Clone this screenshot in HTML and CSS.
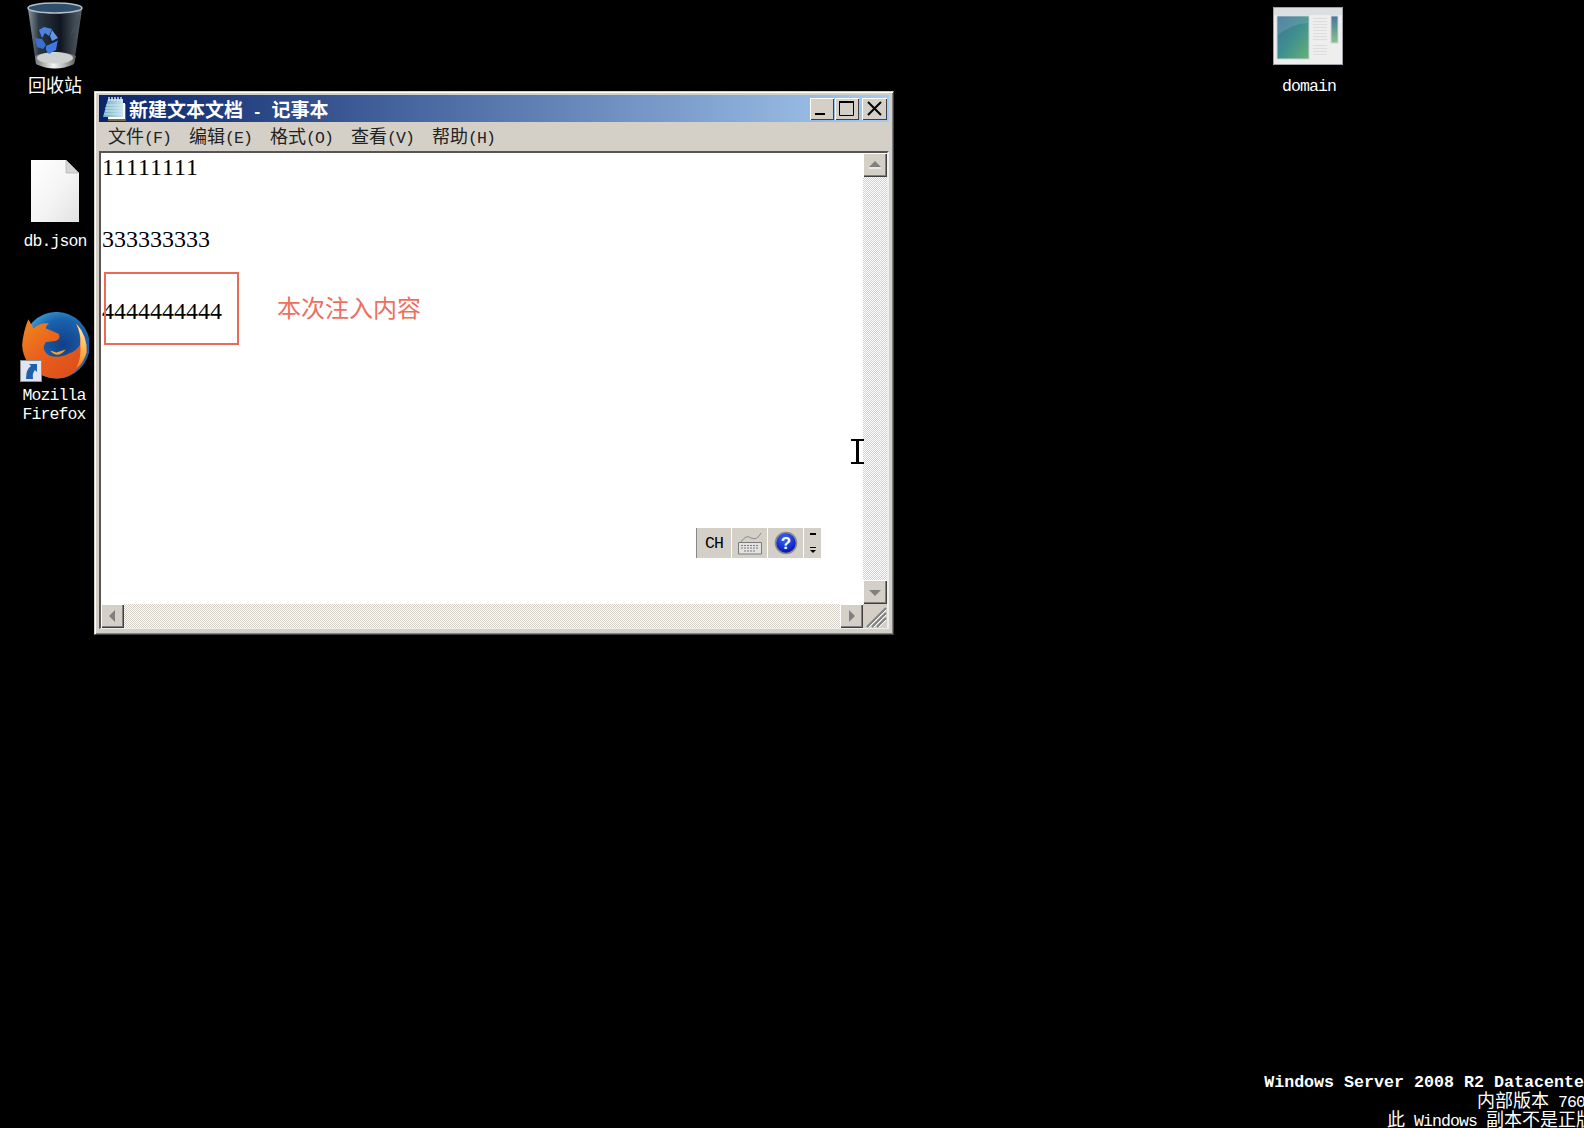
FILE: index.html
```html
<!DOCTYPE html>
<html lang="zh-CN">
<head>
    <meta charset="UTF-8">
    <title>新建文本文档 - 记事本</title>
    <link rel="stylesheet" href="styles.css">
</head>
<body>
<div class="desktop">

    <!-- desktop icons -->
    <div class="icon icon-bin">
        <svg class="icon-pic" width="60" height="72" viewBox="0 0 60 72">
            <defs>
                <linearGradient id="binBody" x1="0" x2="1" y1="0" y2="0">
                    <stop offset="0" stop-color="#8b959c"/>
                    <stop offset=".2" stop-color="#2b3743"/>
                    <stop offset=".6" stop-color="#10161f"/>
                    <stop offset="1" stop-color="#59636a"/>
                </linearGradient>
                <linearGradient id="binBase" x1="0" x2="1" y1="0" y2="0">
                    <stop offset="0" stop-color="#777"/>
                    <stop offset=".45" stop-color="#f4f4f4"/>
                    <stop offset=".7" stop-color="#bbb"/>
                    <stop offset="1" stop-color="#555"/>
                </linearGradient>
            </defs>
            <path d="M3 9 L11 64 Q30 73 49 64 L57 9 Z" fill="url(#binBody)"/>
            <ellipse cx="30" cy="8" rx="27" ry="5" fill="#2f4e6b" stroke="#b4bdc4" stroke-width="1.6"/>
            <path d="M38 46 L54 24 L55 14 L44 38 Z" fill="#434d57"/>
            <path d="M11 64 Q30 73 49 64 L51 56 Q30 48 10 56 Z" fill="url(#binBase)"/>
            <ellipse cx="30" cy="58" rx="18" ry="5.5" fill="#cdd0d1"/>
            <path d="M14 30 L19 27 L27 29 L24 36 L20 33 L17 38 Z" fill="#4c83e0"/>
            <path d="M27 30 L33 38 L27 41 L25 36 Z" fill="#5f96ea"/>
            <path d="M10 38 L17 39 L21 45 L18 49 L12 47 Z" fill="#3a6fd0"/>
            <path d="M21 46 L32 41 L33 39 L31 50 L24 54 L21 50 Z" fill="#3f78e2"/>
        </svg>
        <span class="icon-label">回收站</span>
    </div>

    <div class="icon icon-json">
        <svg class="icon-pic" width="48" height="62" viewBox="0 0 48 62">
            <defs>
                <linearGradient id="filePaper" x1="0" x2="1" y1="0" y2="1">
                    <stop offset="0" stop-color="#ffffff"/>
                    <stop offset=".55" stop-color="#f4f4f4"/>
                    <stop offset="1" stop-color="#e2e2e2"/>
                </linearGradient>
            </defs>
            <path d="M0 0 H35 L48 13 V62 H0 Z" fill="url(#filePaper)"/>
            <path d="M35 0 V13 H48 Z" fill="#d5d5d5" stroke="#aaa" stroke-width=".6"/>
        </svg>
        <span class="icon-label">db.json</span>
    </div>

    <div class="icon icon-firefox">
        <svg class="icon-pic" width="70" height="72" viewBox="0 0 70 72">
            <defs>
                <radialGradient id="foxGlobe" cx=".6" cy=".5" r=".6">
                    <stop offset="0" stop-color="#123f87"/>
                    <stop offset=".65" stop-color="#1a62ad"/>
                    <stop offset="1" stop-color="#3ea0d8"/>
                </radialGradient>
                <linearGradient id="foxTail" x1="0" x2="1" y1="0" y2="1">
                    <stop offset="0" stop-color="#f08a20"/>
                    <stop offset=".45" stop-color="#e95f1c"/>
                    <stop offset="1" stop-color="#d9491a"/>
                </linearGradient>
                <linearGradient id="foxFlame" x1="0" x2="0" y1="0" y2="1">
                    <stop offset="0" stop-color="#fff2b0"/>
                    <stop offset="1" stop-color="#f58a1f"/>
                </linearGradient>
            </defs>
            <g transform="translate(0 1) scale(1.04)">
                <circle cx="36" cy="31" r="32" fill="url(#foxGlobe)"/>
                <path d="M9 6 L14 15 Q20 9 29 10 Q25 13 26 15 L38 20 Q41 25 35 27 L26 28 Q23 32 24 35 Q27 42 35 42 Q44 42 48 39 Q56 36 59 30 Q59 20 55 10 Q66 22 65 38 Q60 56 44 62 Q30 65 19 58 Q4 48 3 31 Q4 18 9 6 Z" fill="url(#foxTail)"/>
                <path d="M55 10 Q66 22 65 38 Q62 48 55 53 Q60 44 59 30 Q60 20 55 10 Z" fill="url(#foxFlame)"/>
                <path d="M30 36 L36 38 L45 35 Q40 41 35 40 Q32 39 30 36 Z" fill="#f6a02a"/>
            </g>
            <rect x="1.5" y="48.5" width="21" height="21" fill="#dfe6ef" stroke="#8a8f95"/>
            <path d="M7 67 Q7 57 12 54 L10 52 H18 V60 L16 58 Q13 61 14 67 Z" fill="#1f5fae"/>
        </svg>
        <span class="icon-label">Mozilla<br>Firefox</span>
    </div>

    <div class="icon icon-domain">
        <svg class="icon-pic" width="70" height="58" viewBox="0 0 70 58">
            <defs>
                <linearGradient id="pagePic" x1="0" x2="1" y1="0" y2="1">
                    <stop offset="0" stop-color="#3f6f9d"/>
                    <stop offset=".5" stop-color="#3f8f8e"/>
                    <stop offset="1" stop-color="#66b274"/>
                </linearGradient>
                <linearGradient id="pageSide" x1="0" x2="0" y1="0" y2="1">
                    <stop offset="0" stop-color="#47749f"/>
                    <stop offset="1" stop-color="#86c48a"/>
                </linearGradient>
            </defs>
            <rect x=".5" y=".5" width="69" height="57" fill="#eeeeee" stroke="#9ea2a6"/>
            <rect x="1" y="1" width="68" height="7" fill="#dcdfe1"/>
            <rect x="4" y="9" width="32" height="43" fill="url(#pagePic)" stroke="#c9d3d6"/>
            <path d="M5 28 Q20 16 35 16 V10 H5 Z" fill="#fff" opacity=".12"/>
            <g fill="#dcdcdc">
                <rect x="40" y="11" width="14" height="1"/><rect x="40" y="14" width="14" height="1"/>
                <rect x="40" y="17" width="14" height="1"/><rect x="40" y="20" width="14" height="1"/>
                <rect x="40" y="23" width="14" height="1"/><rect x="40" y="26" width="14" height="1"/>
                <rect x="40" y="29" width="14" height="1"/><rect x="40" y="32" width="14" height="1"/>
                <rect x="40" y="38" width="14" height="1"/><rect x="40" y="41" width="14" height="1"/>
                <rect x="40" y="44" width="14" height="1"/><rect x="40" y="47" width="14" height="1"/>
            </g>
            <rect x="58" y="9" width="7" height="27" fill="url(#pageSide)" stroke="#cfd3d6"/>
        </svg>
        <span class="icon-label">domain</span>
    </div>

    <!-- notepad window -->
    <div class="window">
        <div class="titlebar">
            <svg class="title-icon" width="24" height="25" viewBox="0 0 24 25">
                <defs>
                    <linearGradient id="padSheet" x1="0" x2="1" y1="0" y2="0">
                        <stop offset="0" stop-color="#6fa9c0"/>
                        <stop offset="1" stop-color="#c7e6ee"/>
                    </linearGradient>
                </defs>
                <path d="M7 8 H24 V25 H6 Z" fill="#7a6a48"/>
                <path d="M7 7 H23 V23 H6 Z" fill="#fff"/>
                <path d="M6 3 H21 V21 H1 Z" fill="url(#padSheet)"/>
                <path d="M4 9 H21 M3 12 H21 M3 15 H21 M2 18 H21" stroke="#d8eef3" stroke-width=".8"/>
                <path d="M7 1 V5 M10 1 V5 M13 1 V5 M16 1 V5 M19 1 V5" stroke="#e4e8ea" stroke-width="1.4"/>
            </svg>
            <span class="title-text">新建文本文档<span class="title-sep"> - </span>记事本</span>
            <div class="title-btns">
                <div class="tbtn"><svg width="24" height="22" viewBox="0 0 24 22"><rect x="5" y="15" width="10" height="2" fill="#000"/></svg></div>
                <div class="tbtn"><svg width="24" height="22" viewBox="0 0 24 22"><path d="M4.5 3.5 H18.5 V17.5 H4.5 Z" fill="none" stroke="#000"/><rect x="4" y="3" width="15" height="2" fill="#000"/></svg></div>
                <div class="tbtn tbtn-close"><svg width="25" height="22" viewBox="0 0 25 22"><path d="M6 4 L19 17 M19 4 L6 17" stroke="#000" stroke-width="2"/></svg></div>
            </div>
        </div>
        <div class="menubar">
            <span class="menu-item">文件<span class="lat">(F)</span></span>
            <span class="menu-item">编辑<span class="lat">(E)</span></span>
            <span class="menu-item">格式<span class="lat">(O)</span></span>
            <span class="menu-item">查看<span class="lat">(V)</span></span>
            <span class="menu-item">帮助<span class="lat">(H)</span></span>
        </div>
        <div class="client">
            <div class="editor">
                <div class="line">11111111</div>
                <div class="line"></div>
                <div class="line">333333333</div>
                <div class="line"></div>
                <div class="line">4444444444</div>
            </div>
            <div class="vscroll">
                <div class="sbtn"><svg width="24" height="24" viewBox="0 0 24 24"><path d="M6 14 L12 8 L18 14 Z" fill="#808080"/><path d="M6 15 H18" stroke="#fff"/></svg></div>
                <div class="track"></div>
                <div class="sbtn"><svg width="24" height="24" viewBox="0 0 24 24"><path d="M6 10 L12 16 L18 10 Z" fill="#808080"/></svg></div>
            </div>
            <div class="hscroll">
                <div class="sbtn"><svg width="23" height="24" viewBox="0 0 23 24"><path d="M14 6 L8 12 L14 18 Z" fill="#808080"/></svg></div>
                <div class="track"></div>
                <div class="sbtn"><svg width="23" height="24" viewBox="0 0 23 24"><path d="M9 6 L15 12 L9 18 Z" fill="#808080"/></svg></div>
            </div>
            <div class="grip">
                <svg width="24" height="24" viewBox="0 0 24 24">
                    <path d="M4 23 L23 4 M9 23 L23 9 M14 23 L23 14" stroke="#808080" stroke-width="2"/>
                    <path d="M6 23 L23 6 M11 23 L23 11 M16 23 L23 16" stroke="#fff"/>
                </svg>
            </div>
        </div>
    </div>

    <!-- annotation drawn over the screenshot -->
    <div class="mark-box"></div>
    <div class="mark-text">本次注入内容</div>

    <!-- language bar -->
    <div class="langbar">
        <div class="lang-cell lang-ch">CH</div>
        <div class="lang-cell lang-key">
            <svg width="30" height="26" viewBox="0 0 30 26">
                <path d="M6 12 Q11 4 16 8 Q22 11 26 3" fill="none" stroke="#8c8c8c"/>
                <path d="M3.5 12.5 H26.5 V24 H3.5 Z" fill="#e2e2e2" stroke="#7c7c7c"/>
                <path d="M6 15.5 H24 M6 18 H24 M9 21 H21" stroke="#7c7c7c" stroke-dasharray="2 1"/>
            </svg>
        </div>
        <div class="lang-cell lang-help">
            <svg width="26" height="26" viewBox="0 0 26 26">
                <defs>
                    <radialGradient id="helpBall" cx=".45" cy=".3" r=".7">
                        <stop offset="0" stop-color="#3f6bff"/>
                        <stop offset="1" stop-color="#0010b0"/>
                    </radialGradient>
                </defs>
                <circle cx="13" cy="13" r="10.5" fill="url(#helpBall)" stroke="#8a8a8a" stroke-width="1.6"/>
                <text x="13" y="19" class="help-mark">?</text>
            </svg>
        </div>
        <div class="lang-cell lang-more">
            <svg width="12" height="26" viewBox="0 0 12 26">
                <rect x="3" y="3" width="6" height="2" fill="#000"/>
                <rect x="3" y="17" width="6" height="1" fill="#000"/>
                <path d="M3 20 H9 L6 23 Z" fill="#000"/>
            </svg>
        </div>
    </div>

    <!-- text cursor -->
    <svg class="ibeam" width="15" height="25" viewBox="0 0 15 25">
        <path d="M1 1 H14 M1 24 H14" stroke="#000" stroke-width="2" fill="none"/>
        <path d="M7.5 1 V24" stroke="#000" stroke-width="3" fill="none"/>
    </svg>

    <div class="watermark">
        <div class="wm-bold">Windows Server 2008 R2 Datacenter</div>
        <div>内部版本<span class="lat"> 7601</span></div>
        <div>此<span class="lat"> Windows </span>副本不是正版</div>
    </div>
</div>
</body>
</html>
```

FILE: styles.css
```css
html,body{
    margin: 0;
    padding: 0;
    height: 100%;
    background-color: #000;
    overflow: hidden;
}
.desktop{
    position: relative;
    width: 1584px;
    height: 1128px;
    overflow: hidden;
    font-family: "Liberation Mono", "Noto Sans CJK SC", monospace;
    font-size: 15px;
    color: #fff;
}
/* latin text is 9px a char next to 18px chinese, a bit taller than mono 15px */
.lat,
.icon-label,
.lang-ch{
    font-size: 16.5px;
    letter-spacing: -0.9px;
    white-space: pre;
}

/* desktop icons */
.icon{
    position: absolute;
    width: 90px;
    display: flex;
    flex-direction: column;
    align-items: center;
    text-align: center;
}
.icon-label{
    line-height: 19px;
}
.icon-bin{
    left: 10px;
    top: 0;
}
.icon-bin .icon-label{
    font-size: 18px;
    letter-spacing: 0;
    margin-top: 6px;
}
.icon-json{
    left: 10px;
    top: 160px;
}
.icon-json .icon-label{
    margin-top: 10px;
}
.icon-firefox{
    left: 9px;
    top: 312px;
}
.icon-firefox .icon-label{
    margin-top: 3px;
    line-height: 18.5px;
}
.icon-domain{
    left: 1264px;
    top: 7px;
}
.icon-domain .icon-pic{
    margin-left: -2px;
}
.icon-domain .icon-label{
    margin-top: 12px;
}

/* window */
.window{
    position: absolute;
    left: 94px;
    top: 91px;
    width: 800px;
    height: 544px;
    box-sizing: border-box;
    padding: 3px 4px 5px 4px;
    display: flex;
    flex-direction: column;
    background-color: #d4d0c8;
    border: 1px solid;
    border-color: #d4d0c8 #404040 #404040 #d4d0c8;
    box-shadow: inset 1px 1px 0 #fff, inset -1px -1px 0 #808080;
}
.titlebar{
    height: 27px;
    flex: none;
    display: flex;
    align-items: center;
    background: linear-gradient(to right, #0a246a, #a6caf0);
    font-size: 19px;
    font-weight: bold;
    white-space: nowrap;
}
.title-sep{
    font-size: 15.83px;
    white-space: pre;
}
.title-icon{
    flex: none;
    margin: 0 3px 0 3px;
}
.title-text{
    flex: 1;
}
.title-btns{
    display: flex;
    gap: 1px;
    padding-right: 2px;
}
.tbtn{
    width: 24px;
    height: 22px;
    background-color: #d4d0c8;
    box-shadow: inset 1px 1px 0 #fff, inset -1px -1px 0 #404040;
}
.tbtn svg,
.sbtn svg,
.grip svg{
    display: block;
}
.tbtn-close{
    width: 25px;
    margin-left: 2px;
}
.menubar{
    height: 29px;
    flex: none;
    display: flex;
    align-items: center;
    padding-top: 4px;
    box-sizing: border-box;
    font-size: 18px;
    line-height: 20px;
    color: #222;
}
.menu-item{
    padding: 0 9px;
}
.client{
    flex: 1;
    min-height: 0;
    display: grid;
    grid-template-columns: 1fr 24px;
    grid-template-rows: 1fr 24px;
    background-color: #fff;
    border-top: 2px solid #555;
    border-left: 2px solid #555;
    border-right: 2px solid #eee;
    border-bottom: 1px solid #eee;
}
.editor{
    padding-left: 1px;
    font-family: "Liberation Serif", serif;
    font-size: 24px;
    font-kerning: none;
    line-height: 28px;
    color: #000;
}
.line{
    height: 36px;
}
.vscroll,
.hscroll{
    display: flex;
    background: repeating-conic-gradient(#d4d0c8 0 25%, #fff 0 50%) 0 0 / 2px 2px;
}
.vscroll{
    flex-direction: column;
}
.track{
    flex: 1;
}
.sbtn,
.grip{
    flex: none;
    width: 24px;
    height: 24px;
    background-color: #d4d0c8;
}
.hscroll .sbtn{
    width: 23px;
}
.sbtn{
    box-shadow: inset 1px 1px 0 #fff, inset -1px -1px 0 #404040, inset -2px -2px 0 #808080;
}

/* red annotation */
.mark-box{
    position: absolute;
    left: 104px;
    top: 272px;
    width: 135px;
    height: 73px;
    box-sizing: border-box;
    border: 2px solid #ea6a58;
}
.mark-text{
    position: absolute;
    left: 277px;
    top: 289px;
    font-family: "Noto Sans CJK SC", sans-serif;
    font-size: 24px;
    line-height: 36px;
    color: #ee6f60;
}

/* language bar */
.langbar{
    position: absolute;
    left: 694px;
    top: 528px;
    height: 30px;
    display: flex;
    background-color: #d4d0c8;
    color: #000;
    border-left: 2px solid #fff;
    box-sizing: border-box;
}
.lang-cell{
    display: flex;
    align-items: center;
    justify-content: center;
    border-left: 1px solid #fff;
    box-sizing: border-box;
}
.lang-ch{
    width: 35px;
    border-left-color: #888;
}
.lang-key{
    width: 36px;
}
.lang-help{
    width: 36px;
}
.lang-more{
    width: 18px;
}
.help-mark{
    font-family: "Liberation Sans", sans-serif;
    font-size: 17px;
    font-weight: bold;
    fill: #fff;
    text-anchor: middle;
}
.ibeam{
    position: absolute;
    left: 850px;
    top: 439px;
}

/* build info at the bottom right, runs off the screen */
.watermark{
    position: absolute;
    right: -10px;
    top: 1073px;
    text-align: right;
    white-space: nowrap;
    line-height: 19.5px;
    font-size: 18px;
}
.wm-bold{
    font-size: 16.67px;
    font-weight: bold;
}
```
